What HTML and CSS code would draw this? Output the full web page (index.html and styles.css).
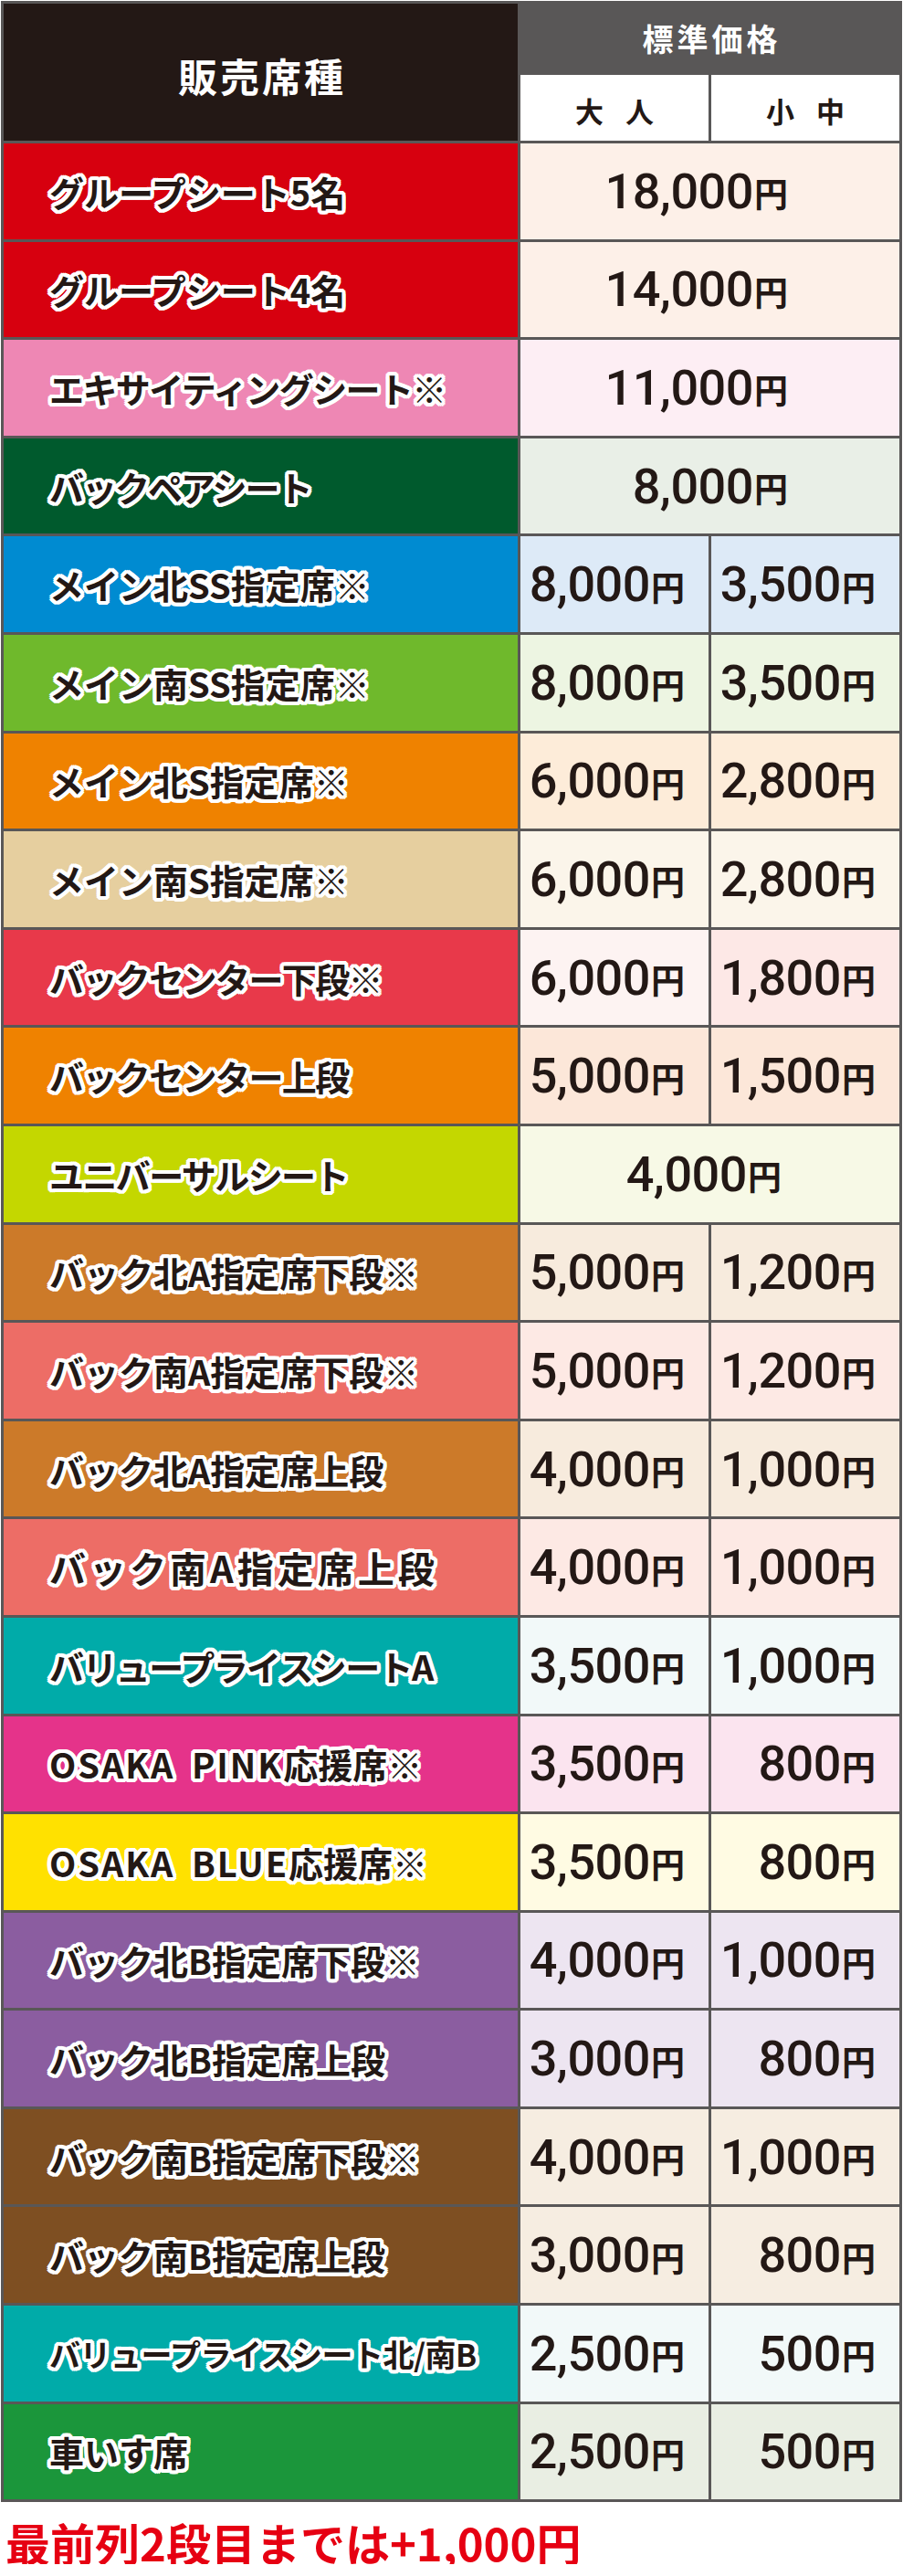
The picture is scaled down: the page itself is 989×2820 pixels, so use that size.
FILE: index.html
```html
<!DOCTYPE html>
<html lang="ja">
<head>
<meta charset="utf-8">
<title>料金表</title>
<link rel="stylesheet" href="styles.css">
</head>
<body>
<div class="table">
  <div class="h-seat">販売席種</div>
  <div class="h-std">標準価格</div>
  <div class="h-sub"><span>大</span><span>人</span></div>
  <div class="h-sub"><span>小</span><span>中</span></div>

  <div class="label c-red">グループシート5名</div>
  <div class="price wide b-red">18,000<span class="yen">円</span></div>

  <div class="label c-red">グループシート4名</div>
  <div class="price wide b-red">14,000<span class="yen">円</span></div>

  <div class="label c-pink kana">エキサイティングシート※</div>
  <div class="price wide b-pink">11,000<span class="yen">円</span></div>

  <div class="label c-dgreen kana2">バックペアシート</div>
  <div class="price wide b-dgreen">8,000<span class="yen">円</span></div>

  <div class="label c-blue">メイン北SS指定席※</div>
  <div class="price b-blue">8,000<span class="yen">円</span></div>
  <div class="price b-blue">3,500<span class="yen">円</span></div>

  <div class="label c-green">メイン南SS指定席※</div>
  <div class="price b-green">8,000<span class="yen">円</span></div>
  <div class="price b-green">3,500<span class="yen">円</span></div>

  <div class="label c-orange">メイン北S指定席※</div>
  <div class="price b-orange">6,000<span class="yen">円</span></div>
  <div class="price b-orange">2,800<span class="yen">円</span></div>

  <div class="label c-beige">メイン南S指定席※</div>
  <div class="price b-beige">6,000<span class="yen">円</span></div>
  <div class="price b-beige">2,800<span class="yen">円</span></div>

  <div class="label c-rose kana">バックセンター下段※</div>
  <div class="price b-rose1">6,000<span class="yen">円</span></div>
  <div class="price b-rose">1,800<span class="yen">円</span></div>

  <div class="label c-orange kana">バックセンター上段</div>
  <div class="price b-peach">5,000<span class="yen">円</span></div>
  <div class="price b-peach">1,500<span class="yen">円</span></div>

  <div class="label c-lime kana">ユニバーサルシート</div>
  <div class="price wide b-lime uni">4,000<span class="yen">円</span></div>

  <div class="label c-ochre">バック北A指定席下段※</div>
  <div class="price b-ochre">5,000<span class="yen">円</span></div>
  <div class="price b-ochre">1,200<span class="yen">円</span></div>

  <div class="label c-salmon">バック南A指定席下段※</div>
  <div class="price b-salmon">5,000<span class="yen">円</span></div>
  <div class="price b-salmon">1,200<span class="yen">円</span></div>

  <div class="label c-ochre">バック北A指定席上段</div>
  <div class="price b-ochre">4,000<span class="yen">円</span></div>
  <div class="price b-ochre">1,000<span class="yen">円</span></div>

  <div class="label c-salmon spaced">バック南A指定席上段</div>
  <div class="price b-salmon">4,000<span class="yen">円</span></div>
  <div class="price b-salmon">1,000<span class="yen">円</span></div>

  <div class="label c-teal kana">バリュープライスシートA</div>
  <div class="price b-teal">3,500<span class="yen">円</span></div>
  <div class="price b-teal">1,000<span class="yen">円</span></div>

  <div class="label c-magenta"><span class="latin">OSAKA PINK</span>応援席※</div>
  <div class="price b-magenta">3,500<span class="yen">円</span></div>
  <div class="price b-magenta">800<span class="yen">円</span></div>

  <div class="label c-yellow"><span class="latin">OSAKA BLUE</span>応援席※</div>
  <div class="price b-yellow">3,500<span class="yen">円</span></div>
  <div class="price b-yellow">800<span class="yen">円</span></div>

  <div class="label c-purple">バック北B指定席下段※</div>
  <div class="price b-purple">4,000<span class="yen">円</span></div>
  <div class="price b-purple">1,000<span class="yen">円</span></div>

  <div class="label c-purple">バック北B指定席上段</div>
  <div class="price b-purple">3,000<span class="yen">円</span></div>
  <div class="price b-purple">800<span class="yen">円</span></div>

  <div class="label c-brown">バック南B指定席下段※</div>
  <div class="price b-brown">4,000<span class="yen">円</span></div>
  <div class="price b-brown">1,000<span class="yen">円</span></div>

  <div class="label c-brown">バック南B指定席上段</div>
  <div class="price b-brown">3,000<span class="yen">円</span></div>
  <div class="price b-brown">800<span class="yen">円</span></div>

  <div class="label c-teal small">バリュープライスシート北/南B</div>
  <div class="price b-teal">2,500<span class="yen">円</span></div>
  <div class="price b-teal">500<span class="yen">円</span></div>

  <div class="label c-kgreen">車いす席</div>
  <div class="price b-kgreen">2,500<span class="yen">円</span></div>
  <div class="price b-kgreen">500<span class="yen">円</span></div>
</div>
<p class="note">最前列2段目までは+1,000円</p>
</body>
</html>
```

FILE: styles.css
```css
html, body {
  margin: 0;
  padding: 0;
  background: #ffffff;
}

body {
  font-family: "Noto Sans CJK JP", "Noto Sans", sans-serif;
  color: #231815;
}

.table {
  margin: 1px 0 0 1px;
  width: 987px;
  box-sizing: border-box;
  padding: 3px;
  background: #595757;
  display: grid;
  grid-template-columns: 563px 206px 206px;
  grid-template-rows: 75px 72px repeat(24, 104.6px);
  column-gap: 3px;
  row-gap: 3px;
}

.h-seat {
  grid-row: 1 / span 2;
  background: #231815;
  color: #ffffff;
  font-size: 43px;
  font-weight: 700;
  letter-spacing: 3px;
  display: flex;
  align-items: center;
  justify-content: center;
  padding: 6px 0 0 3px;
}

.h-std {
  grid-column: 2 / span 2;
  background: #595757;
  color: #ffffff;
  font-size: 34px;
  font-weight: 700;
  letter-spacing: 4px;
  display: flex;
  align-items: center;
  justify-content: center;
  padding-left: 4px;
}

.h-sub {
  background: #ffffff;
  font-size: 31px;
  font-weight: 700;
  display: flex;
  align-items: center;
  justify-content: center;
  gap: 24px;
  padding-top: 4px;
}

.label {
  display: flex;
  align-items: center;
  padding-left: 50px;
  font-size: 38px;
  font-weight: 700;
  color: #231815;
  white-space: nowrap;
  text-shadow:
    4px 0 0 #fff, -4px 0 0 #fff, 0 4px 0 #fff, 0 -4px 0 #fff,
    3px 3px 0 #fff, -3px 3px 0 #fff, 3px -3px 0 #fff, -3px -3px 0 #fff,
    4px 2px 0 #fff, 4px -2px 0 #fff, -4px 2px 0 #fff, -4px -2px 0 #fff,
    2px 4px 0 #fff, -2px 4px 0 #fff, 2px -4px 0 #fff, -2px -4px 0 #fff,
    0 0 2px #fff;
}

.label.kana {
  letter-spacing: -1.6px;
}

.label.kana2 {
  letter-spacing: -2px;
}

.label.spaced {
  font-size: 40px;
  letter-spacing: 4px;
}

.label.small {
  font-size: 34px;
  letter-spacing: -0.5px;
}

.latin {
  letter-spacing: 2px;
  word-spacing: 8px;
}

.price {
  display: flex;
  align-items: center;
  justify-content: flex-end;
  padding-right: 26px;
  font-family: "Roboto", "Liberation Sans", sans-serif;
  font-weight: 500;
  font-size: 54px;
  color: #231815;
  white-space: nowrap;
  letter-spacing: -0.5px;
}

.price.wide {
  grid-column: 2 / span 2;
  padding-right: 122px;
}

.price.uni {
  padding-right: 129px;
}

.yen {
  font-family: "Noto Sans CJK JP", sans-serif;
  font-weight: 700;
  font-size: 37px;
  letter-spacing: 0;
  margin-left: 1px;
  position: relative;
  top: 2px;
}

.note {
  margin: 19px 0 0 6px;
  font-size: 49px;
  font-weight: 700;
  line-height: 1;
  color: #e60012;
  letter-spacing: 0;
}

/* label colours */
.c-red { background: #d7000f; }
.c-pink { background: #ee87b4; }
.c-dgreen { background: #005a2d; }
.c-blue { background: #008bd1; }
.c-green { background: #6fb92c; }
.c-orange { background: #ef8200; }
.c-beige { background: #e6cf9f; }
.c-rose { background: #e8394a; }
.c-lime { background: #c4d700; }
.c-ochre { background: #cc7a29; }
.c-salmon { background: #ed6d66; }
.c-teal { background: #00aba9; }
.c-magenta { background: #e5338a; }
.c-yellow { background: #ffe100; }
.c-purple { background: #8b5da0; }
.c-brown { background: #7e4f22; }
.c-kgreen { background: #1b963b; }

/* price backgrounds */
.b-red { background: #fdf0e8; }
.b-pink { background: #fdeef4; }
.b-dgreen { background: #e9efe7; }
.b-blue { background: #ddeaf7; }
.b-green { background: #edf5e2; }
.b-orange { background: #fdecd9; }
.b-beige { background: #fbf5ea; }
.b-rose1 { background: #fdf3f2; }
.b-rose { background: #fde8e6; }
.b-peach { background: #fce7d9; }
.b-lime { background: #f7f9e6; }
.b-ochre { background: #f7ebdd; }
.b-salmon { background: #fde9e4; }
.b-teal { background: #f2f9f9; }
.b-magenta { background: #fbe4ef; }
.b-yellow { background: #fffbe3; }
.b-purple { background: #ede5f1; }
.b-brown { background: #f6ede1; }
.b-kgreen { background: #e9eee3; }
```
